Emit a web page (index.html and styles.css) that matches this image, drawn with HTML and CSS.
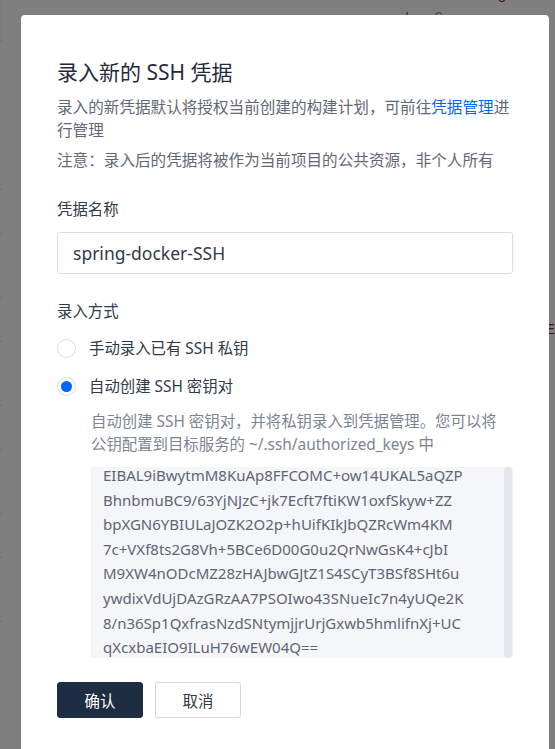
FILE: index.html
```html
<!DOCTYPE html>
<html lang="zh-CN">
<head>
    <meta charset="UTF-8">
    <meta name="viewport" content="width=device-width, initial-scale=1.0">
    <title>录入新的 SSH 凭据</title>
    <link rel="stylesheet" href="styles.css">
</head>
<body>
    <div class="page">
        <div class="page-list">
            <div class="row row-head"></div>
            <div class="row row-tall-first"></div>
            <div class="row row-short"></div>
            <div class="row row-tall"></div>
            <div class="row row-short"></div>
            <div class="row row-tall"></div>
            <div class="row row-short"></div>
            <div class="row row-tall"></div>
            <div class="row row-short"></div>
            <div class="row row-tall"></div>
        </div>
        <div class="page-code">
            <div class="code-top">
                <span class="code-green">oxdev @ave</span>
                <span class="code-red code-eight">8</span>
            </div>
            <div class="code-line code-red line-a">a'</div>
            <div class="code-line code-grey line-b">縱</div>
            <div class="code-line code-red line-c">De</div>
            <div class="code-line code-red line-d">- E</div>
            <div class="code-line code-red line-e">$</div>
        </div>
    </div>

    <div class="mask"></div>

    <div class="modal">
        <h1 class="modal-title">录入新的 SSH 凭据</h1>
        <p class="modal-desc">录入的新凭据默认将授权当前创建的构建计划，可前往<a href="#" class="link">凭据管理</a>进行管理</p>
        <p class="modal-desc modal-note">注意：录入后的凭据将被作为当前项目的公共资源，非个人所有</p>

        <div class="field field-name">
            <label class="field-label" for="cred-name">凭据名称</label>
            <input class="text-input" type="text" id="cred-name" value="spring-docker-SSH">
        </div>

        <div class="field field-mode">
            <div class="field-label">录入方式</div>
            <div class="radio-group">
                <label class="radio">
                    <span class="radio-circle"></span>
                    <span class="radio-text">手动录入已有 SSH 私钥</span>
                </label>
                <label class="radio radio-checked">
                    <span class="radio-circle"></span>
                    <span class="radio-text">自动创建 SSH 密钥对</span>
                </label>
            </div>
            <div class="radio-extra">
                <p class="help">自动创建 SSH 密钥对，并将私钥录入到凭据管理。您可以将<br>公钥配置到目标服务的 ~/.ssh/authorized_keys 中</p>
                <div class="key-box">
                    <div class="key-text">EIBAL9iBwytmM8KuAp8FFCOMC+ow14UKAL5aQZP<br>BhnbmuBC9/63YjNJzC+jk7Ecft7ftiKW1oxfSkyw+ZZ<br>bpXGN6YBIULaJOZK2O2p+hUifKIkJbQZRcWm4KM<br>7c+VXf8ts2G8Vh+5BCe6D00G0u2QrNwGsK4+cJbI<br>M9XW4nODcMZ28zHAJbwGJtZ1S4SCyT3BSf8SHt6u<br>ywdixVdUjDAzGRzAA7PSOIwo43SNueIc7n4yUQe2K<br>8/n36Sp1QxfrasNzdSNtymjjrUrjGxwb5hmlifnXj+UC<br>qXcxbaEIO9ILuH76wEW04Q==</div>
                    <div class="key-scrollbar"></div>
                </div>
            </div>
        </div>

        <div class="actions">
            <button class="btn btn-primary">确认</button>
            <button class="btn btn-default">取消</button>
        </div>
    </div>
</body>
</html>
```

FILE: styles.css
```css
* {
    box-sizing: border-box;
}

body {
    margin: 0;
    width: 555px;
    height: 749px;
    overflow: hidden;
    font-family: "Noto Sans", "Noto Sans CJK SC", sans-serif;
    background-color: #ffffff;
}

/* page behind the dialog */
.page {
    display: flex;
    height: 749px;
}

.page-list {
    width: 21px;
    display: flex;
    flex-direction: column;
}

.row {
    border-bottom: 1px solid #e0e0e0;
}

.row-head {
    height: 41px;
    background-color: #f6f6f6;
}

.row-tall-first {
    height: 149px;
}

.row-short {
    height: 44px;
}

.row-tall {
    height: 64px;
}

.page-code {
    flex: 1;
    font-family: "Liberation Mono", monospace;
    font-size: 14px;
    line-height: 20px;
}

.code-top {
    display: flex;
    padding-left: 382px;
    height: 24px;
    white-space: nowrap;
}

.code-green {
    color: #3a7a2a;
    margin-top: 9px;
}

.code-eight {
    margin-left: 30px;
    margin-top: -12px;
}

.code-line {
    height: 20px;
    padding-left: 528px;
    white-space: nowrap;
}

.code-red {
    color: #8b1a1a;
}

.code-grey {
    color: #444;
}

.line-a {
    margin-top: 86px;
}

.line-b {
    margin-top: 60px;
}

.line-c {
    margin-top: 20px;
}

.line-d {
    margin-top: 70px;
}

.line-e {
    margin-top: 124px;
}

.mask {
    position: fixed;
    inset: 0;
    background-color: rgba(0, 0, 0, 0.5);
}

/* dialog */
.modal {
    position: absolute;
    left: 21px;
    top: 15px;
    width: 528px;
    height: 760px;
    background-color: #ffffff;
    border-radius: 4px;
    padding: 42px 36px 0 36px;
}

.modal-title {
    margin: 0;
    font-size: 21px;
    line-height: 30px;
    font-weight: 400;
    color: #1f2b3d;
}

.modal-desc {
    margin: 9px 0 0;
    font-size: 15.6px;
    line-height: 23px;
    color: #5f6876;
}

.modal-note {
    margin-top: 7px;
}

.link {
    color: #0066ff;
    text-decoration: none;
}

.field-name {
    margin-top: 26px;
}

.field-mode {
    margin-top: 26px;
}

.field-label {
    display: block;
    font-size: 15.4px;
    line-height: 23px;
    color: #2f3a4a;
}

.text-input {
    display: block;
    width: 100%;
    height: 42px;
    margin-top: 11px;
    padding: 0 15px;
    border: 1px solid #dadee5;
    border-radius: 3px;
    font-family: inherit;
    font-size: 17.5px;
    color: #2f3a4a;
    outline: none;
}

.radio-group {
    display: flex;
    flex-direction: column;
    gap: 15px;
    margin-top: 14px;
}

.radio {
    display: flex;
    align-items: center;
    gap: 13px;
    height: 23px;
}

.radio-circle {
    width: 19px;
    height: 19px;
    border: 1px solid #d9dde4;
    border-radius: 50%;
    display: flex;
    align-items: center;
    justify-content: center;
}

.radio-checked .radio-circle::after {
    content: "";
    width: 11px;
    height: 11px;
    border-radius: 50%;
    background-color: #0066ff;
}

.radio-text {
    font-size: 15.4px;
    line-height: 23px;
    color: #2f3a4a;
}

.radio-extra {
    padding-left: 34px;
    margin-top: 12px;
}

.help {
    margin: 0;
    font-size: 15.4px;
    line-height: 23px;
    color: #7b8494;
}

.key-box {
    position: relative;
    margin-top: 11px;
    height: 191px;
    background-color: #f5f6f9;
    border-radius: 2px;
    overflow: hidden;
    padding: 0 14px 0 12px;
}

.key-text {
    margin-top: -4px;
    font-size: 15px;
    line-height: 24.6px;
    color: #5e6575;
    white-space: nowrap;
}

.key-scrollbar {
    position: absolute;
    top: 0;
    right: 1px;
    width: 8px;
    height: 100%;
    border-radius: 4px;
    background-color: #e5e7ec;
}

.actions {
    display: flex;
    gap: 12px;
    margin-top: 24px;
}

.btn {
    width: 86px;
    height: 36px;
    border-radius: 3px;
    font-family: inherit;
    font-size: 15.4px;
    cursor: pointer;
}

.btn-primary {
    background-color: #1f2d42;
    border: 1px solid #1f2d42;
    color: #ffffff;
}

.btn-default {
    background-color: #ffffff;
    border: 1px solid #d5d9e0;
    color: #2f3a4a;
}
```
